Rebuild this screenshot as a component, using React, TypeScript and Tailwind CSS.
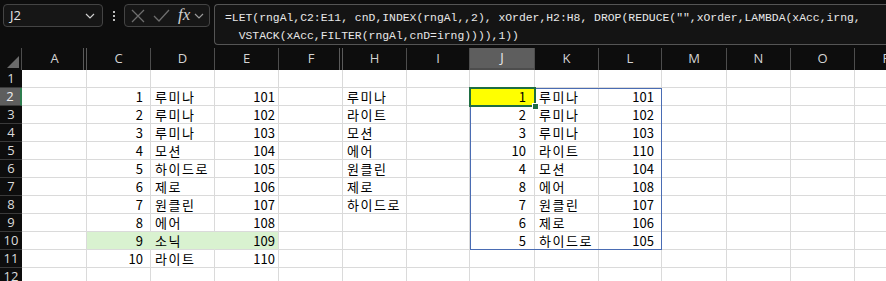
import React from 'react';

type Col = { id: string; w: string; hiddenAfter?: boolean };

const cols: Col[] = [
  { id: 'A', w: 'w-[65px]', hiddenAfter: true },
  { id: 'C', w: 'w-[64px]' },
  { id: 'D', w: 'w-[64px]' },
  { id: 'E', w: 'w-[64px]' },
  { id: 'F', w: 'w-[64px]', hiddenAfter: true },
  { id: 'H', w: 'w-[64px]' },
  { id: 'I', w: 'w-[63px]' },
  { id: 'J', w: 'w-[65px]' },
  { id: 'K', w: 'w-[64px]' },
  { id: 'L', w: 'w-[63px]' },
  { id: 'M', w: 'w-[65px]' },
  { id: 'N', w: 'w-[64px]' },
  { id: 'O', w: 'w-[64px]' },
  { id: 'P', w: 'w-[64px]' },
];

const source: [number, string, number][] = [
  [1, '루미나', 101],
  [2, '루미나', 102],
  [3, '루미나', 103],
  [4, '모션', 104],
  [5, '하이드로', 105],
  [6, '제로', 106],
  [7, '원클린', 107],
  [8, '에어', 108],
  [9, '소닉', 109],
  [10, '라이트', 110],
];

const order = ['루미나', '라이트', '모션', '에어', '원클린', '제로', '하이드로'];

// 정렬된 결과 (spill)
const result: [number, string, number][] = [
  [1, '루미나', 101],
  [2, '루미나', 102],
  [3, '루미나', 103],
  [10, '라이트', 110],
  [4, '모션', 104],
  [8, '에어', 108],
  [7, '원클린', 107],
  [6, '제로', 106],
  [5, '하이드로', 105],
];

const rightPad: Record<string, string> = {
  C: 'justify-end pr-[7px]',
  E: 'justify-end pr-[3px]',
  J: 'justify-end pr-[8px]',
  L: 'justify-end pr-[7px]',
};

function cellValue(row: number, col: string): string | number | null {
  const s = source[row - 2];
  const r = result[row - 2];
  if (col === 'C' && s) return s[0];
  if (col === 'D' && s) return s[1];
  if (col === 'E' && s) return s[2];
  if (col === 'H' && order[row - 2]) return order[row - 2];
  if (col === 'J' && r) return r[0];
  if (col === 'K' && r) return r[1];
  if (col === 'L' && r) return r[2];
  return null;
}

const Chevron = ({ className }: { className?: string }) => (
  <svg width="10" height="6" viewBox="0 0 10 6" className={className}>
    <path d="M1 1l4 4 4-4" fill="none" stroke="currentColor" strokeWidth="1.2" />
  </svg>
);

const FormulaBar = () => (
  <div className="h-[48px] flex items-start pt-[4px] pl-[3px] bg-[#0d0d0d]">
    {/* Name box */}
    <div className="w-[100px] h-[23px] rounded-[4px] border border-[#444] bg-[#161616] flex items-center justify-between pl-[6px] pr-[7px]">
      <span className="text-[13px] text-[#e6e6e6] font-['Open_Sans',sans-serif]">J2</span>
      <Chevron className="text-[#cfcfcf]" />
    </div>

    <div className="w-[21px] h-[23px] flex flex-col items-center justify-center gap-[2px]">
      <span className="w-[2px] h-[2px] bg-[#bdbdbd]" />
      <span className="w-[2px] h-[2px] bg-[#bdbdbd]" />
      <span className="w-[2px] h-[2px] bg-[#bdbdbd]" />
    </div>

    {/* cancel / enter / fx */}
    <div className="w-[86px] h-[23px] rounded-[4px] border border-[#444] bg-[#161616] flex items-center pl-[6px] text-[#6e6e6e]">
      <svg width="14" height="14" viewBox="0 0 14 14">
        <path d="M1 1l12 12M13 1L1 13" stroke="currentColor" strokeWidth="1.3" fill="none" />
      </svg>
      <svg width="17" height="13" viewBox="0 0 17 13" className="ml-[8px]">
        <path d="M1 7l5 5L16 1" stroke="currentColor" strokeWidth="1.3" fill="none" />
      </svg>
      <span className="ml-[8px] text-[17px] italic text-[#d0d0d0] font-['Liberation_Serif',serif] leading-none -mt-[2px]">fx</span>
      <Chevron className="ml-[4px] text-[#9a9a9a]" />
    </div>

    {/* formula */}
    <div className="ml-[4px] flex-1 h-[41px] rounded-l-[4px] border border-r-0 border-[#555] bg-[#141414] pl-[10px] pt-[4px] text-[11.4px] leading-[18px] text-[#e8e8e8] font-['Liberation_Mono',monospace] whitespace-pre">
      <div>{'=LET(rngAl,C2:E11, cnD,INDEX(rngAl,,2), xOrder,H2:H8, DROP(REDUCE("",xOrder,LAMBDA(xAcc,irng,'}</div>
      <div>{'  VSTACK(xAcc,FILTER(rngAl,cnD=irng)))),1))'}</div>
    </div>
  </div>
);

const HeaderRow = () => (
  <div className="flex h-[22px] bg-[#0d0d0d] font-['Open_Sans',sans-serif] text-[13px] text-[#d4d4d4]">
    <div className="w-[22px] shrink-0 h-full flex items-end justify-end pr-[2px] pb-[2px] border-r border-[#4d4d4d]">
      <svg width="12" height="12" viewBox="0 0 12 12">
        <path d="M12 0L12 12L0 12Z" fill="#6b6b6b" />
      </svg>
    </div>
    {cols.map((c) => (
      <div
        key={c.id}
        className={`${c.w} shrink-0 h-full flex items-center justify-center relative ${
          c.id === 'J' ? 'bg-[#5e5e5e] border-b-2 border-[#2f7d4f] text-[#eaeaea]' : ''
        } ${c.hiddenAfter ? '' : 'border-r border-[#4d4d4d]'}`}
      >
        {c.id}
        {c.hiddenAfter && (
          <div className="absolute right-0 top-0 h-full w-[4px] border-x border-[#5a5a5a]" />
        )}
      </div>
    ))}
  </div>
);

const Row = ({ n }: { n: number }) => {
  const selected = n === 2;
  return (
    <div className="flex h-[18px]">
      <div
        className={`w-[22px] shrink-0 h-full flex items-center justify-center text-[13px] font-['Open_Sans',sans-serif] border-b border-[#3a3a3a] ${
          selected ? 'bg-[#5e5e5e] text-[#f0f0f0] border-r-2 border-r-[#2f7d4f]' : 'bg-[#0d0d0d] text-[#dcdcdc]'
        }`}
      >
        {n}
      </div>
      {cols.map((c) => {
        const v = cellValue(n, c.id);
        const green = n === 10 && (c.id === 'C' || c.id === 'D' || c.id === 'E');
        const yellow = n === 2 && c.id === 'J';
        const isText = typeof v === 'string';
        const align = rightPad[c.id] ?? 'justify-start pl-[4px]';
        let fill = 'bg-white border-r-[#dadada]';
        if (green) fill = c.id === 'E' ? 'bg-[#d9f2d0] border-r-[#dadada]' : 'bg-[#d9f2d0] border-r-[#d9f2d0]';
        if (yellow) fill = 'bg-[#ffff00] border-r-[#dadada]';
        return (
          <div
            key={c.id}
            className={`${c.w} shrink-0 h-full flex items-center ${align} ${fill} ${
              isText ? 'tracking-[1.5px]' : ''
            } border-r border-b border-b-[#dadada] text-[13px] text-black font-['Noto_Sans_CJK_KR',sans-serif] whitespace-nowrap overflow-hidden`}
          >
            {v}
          </div>
        );
      })}
    </div>
  );
};

export default function App() {
  const rows = Array.from({ length: 12 }, (_, i) => i + 1);
  return (
    <div className="w-[886px] h-[281px] overflow-hidden bg-[#0d0d0d]">
      <FormulaBar />
      <div className="relative">
        <HeaderRow />
        {rows.map((n) => (
          <Row key={n} n={n} />
        ))}

        {/* spill range J2:L10 */}
        <div className="absolute left-[470px] top-[40px] w-[192px] h-[162px] border border-[#4a6cb3] pointer-events-none" />
        {/* active cell J2 */}
        <div className="absolute left-[469px] top-[39px] w-[67px] h-[20px] border-2 border-[#1f6e43] pointer-events-none" />
        <div className="absolute left-[532px] top-[55px] w-[7px] h-[7px] bg-[#1f6e43] border border-white" />
      </div>
    </div>
  );
}
